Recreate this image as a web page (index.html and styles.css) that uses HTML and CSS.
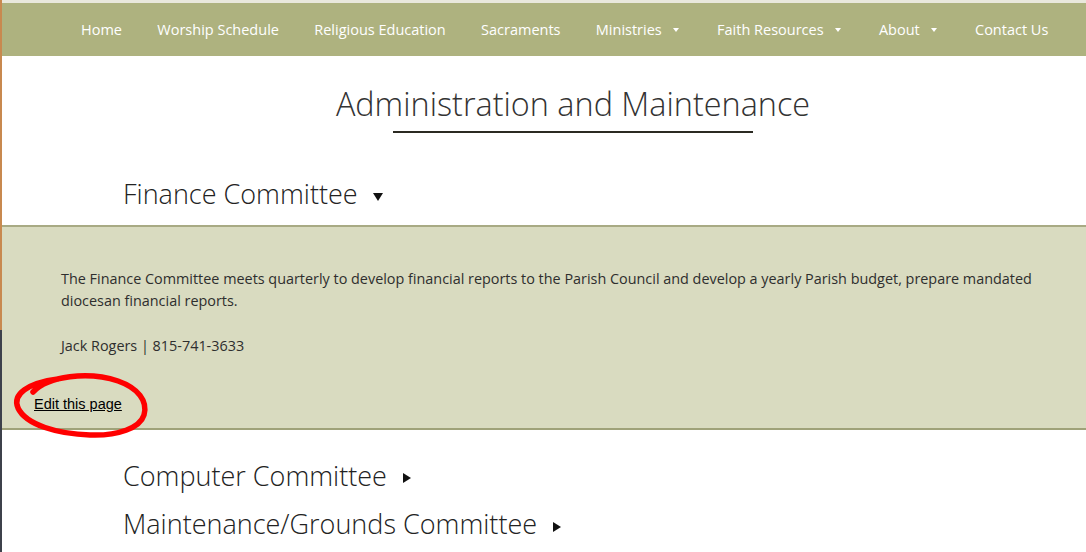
FILE: index.html
```html
<!DOCTYPE html>
<html lang="en">
<head>
<meta charset="utf-8">
<title>Administration and Maintenance</title>
<link rel="stylesheet" href="styles.css">
</head>
<body>
<div class="edge"></div>
<div class="page">
  <div class="topstrip"></div>
  <nav class="nav">
    <a class="nav-item" href="#">Home</a>
    <a class="nav-item" href="#">Worship Schedule</a>
    <a class="nav-item" href="#">Religious Education</a>
    <a class="nav-item" href="#">Sacraments</a>
    <a class="nav-item" href="#">Ministries<span class="nav-caret"></span></a>
    <a class="nav-item" href="#">Faith Resources<span class="nav-caret"></span></a>
    <a class="nav-item" href="#">About<span class="nav-caret"></span></a>
    <a class="nav-item" href="#">Contact Us</a>
  </nav>

  <div class="title-wrap">
    <h1 class="title">Administration and Maintenance</h1>
    <div class="title-rule"></div>
  </div>

  <div class="sections">
    <h2 class="heading">Finance Committee<span class="caret-down"></span></h2>
    <div class="panel">
      <div class="panel-body">
        <p>The Finance Committee meets quarterly to develop financial reports to the Parish Council and develop a yearly Parish budget, prepare mandated diocesan financial reports.</p>
        <p>Jack Rogers | 815-741-3633</p>
      </div>
      <div class="edit-row"><a class="edit-link" href="#">Edit this page</a></div>
    </div>
    <h2 class="heading">Computer Committee<span class="caret-right"></span></h2>
    <h2 class="heading">Maintenance/Grounds Committee<span class="caret-right"></span></h2>
  </div>

  <svg class="marker" width="200" height="460" viewBox="0 0 200 460" aria-hidden="true">
    <path d="M33 392 C48 376 88 371 118 381 C138 388 148 401 144 415 C140 428 118 436 90 435 C58 434 26 425 18 408 C12 394 28 383 58 379" fill="none" stroke="#ff0000" stroke-width="5.5" stroke-linecap="round" stroke-linejoin="round"/>
  </svg>
</div>
</body>
</html>
```

FILE: styles.css
```css
html, body {
  margin: 0;
  padding: 0;
  background: #ffffff;
}

body {
  display: flex;
  min-height: 552px;
  font-family: "Open Sans", "Noto Sans", sans-serif;
  color: #333333;
  overflow: hidden;
}

.edge {
  width: 2px;
  flex-shrink: 0;
  background: linear-gradient(to bottom, #c8894f 0, #c8894f 330px, #3d414b 330px, #3d414b 100%);
}

.page {
  flex: 1;
  position: relative;
  min-width: 0;
}

.topstrip {
  height: 3px;
  background: #e9e8dc;
}

.nav {
  height: 53px;
  background: #aeb27f;
  display: flex;
  justify-content: flex-end;
  align-items: center;
  padding-right: 20px;
}

.nav-item {
  display: flex;
  align-items: center;
  padding: 0 17.65px;
  color: #ffffff;
  font-size: 14.5px;
  text-decoration: none;
  white-space: nowrap;
}

.nav-caret {
  display: inline-block;
  width: 0;
  height: 0;
  margin: 1px 3px 0 11px;
  border-left: 3px solid transparent;
  border-right: 3px solid transparent;
  border-top: 4px solid #ffffff;
}

.title-wrap {
  display: flex;
  flex-direction: column;
  align-items: center;
  padding-left: 58px;
  margin-top: 25px;
}

.title {
  margin: 0;
  font-size: 32.4px;
  line-height: 44px;
  font-weight: 300;
  color: #333333;
}

.title-rule {
  width: 360px;
  height: 2px;
  margin-top: 6px;
  background: #2b2a22;
}

.sections {
  margin-top: 43px;
}

.heading {
  margin: 0 0 12.5px;
  padding-left: 121px;
  font-size: 27px;
  line-height: 36px;
  font-weight: 300;
  color: #222222;
}

.caret-down {
  display: inline-block;
  width: 0;
  height: 0;
  margin-left: 15px;
  vertical-align: middle;
  border-left: 5.5px solid transparent;
  border-right: 5.5px solid transparent;
  border-top: 8px solid #111111;
}

.caret-right {
  display: inline-block;
  width: 0;
  height: 0;
  margin-left: 16px;
  vertical-align: middle;
  border-top: 5px solid transparent;
  border-bottom: 5px solid transparent;
  border-left: 8px solid #111111;
}

.panel {
  background: #d9dbc0;
  border-top: 2px solid #a8aa84;
  border-bottom: 2px solid #9fa279;
  padding: 41px 0 15.5px;
  margin-bottom: 28px;
}

.panel-body {
  padding: 0 35px 0 59px;
  font-size: 14.4px;
  line-height: 22.5px;
  color: #2e2e2e;
}

.panel-body p {
  margin: 0 0 22.5px;
}

.panel-body p:last-child {
  margin-bottom: 0;
}

.edit-row {
  margin-top: 37.5px;
  padding-left: 32px;
  line-height: 16px;
}

.edit-link {
  font-family: "Liberation Sans", Arial, sans-serif;
  font-size: 14.5px;
  color: #000000;
  text-decoration: underline;
}

.marker {
  position: absolute;
  left: -2px;
  top: 0;
  pointer-events: none;
}
```
